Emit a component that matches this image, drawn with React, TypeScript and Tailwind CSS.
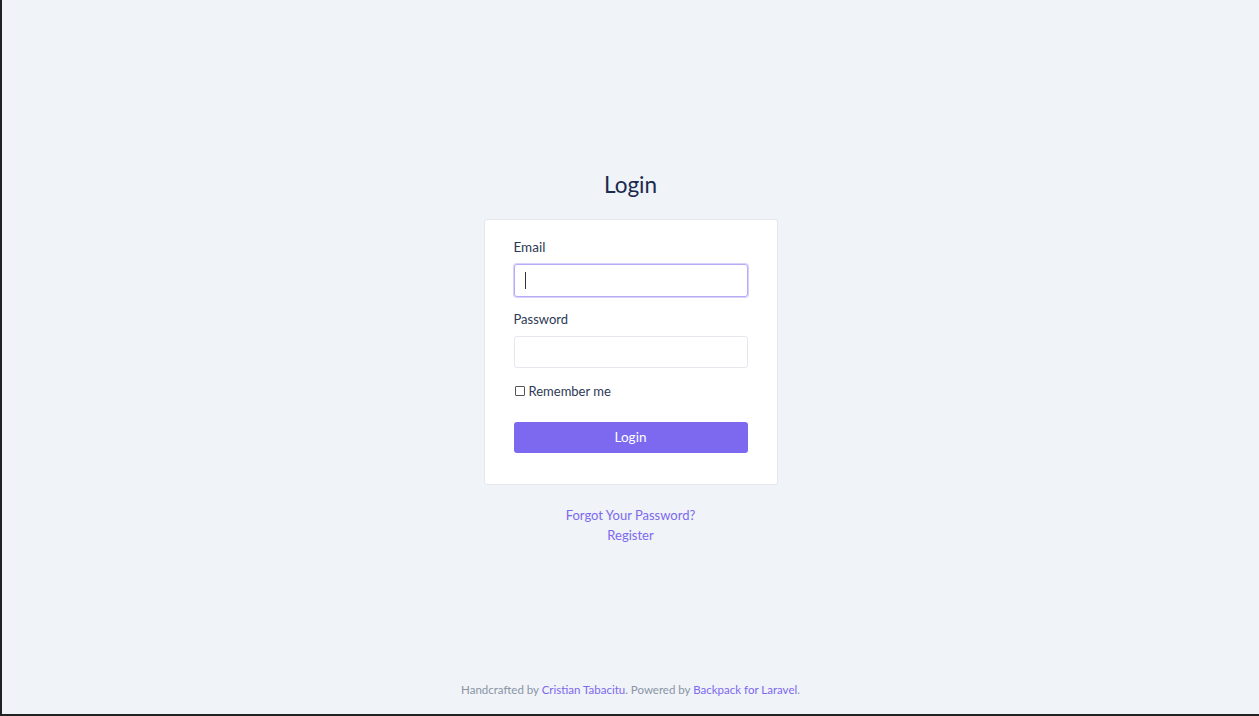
export default function App() {
  return (
    <div
      className="min-h-screen w-full bg-[#f0f3f7] border-l-2 border-b-2 border-[#222] flex flex-col text-[#1e2a4a]"
      style={{ fontFamily: "Lato, 'Noto Sans', sans-serif" }}
    >
      <main className="flex flex-col items-center pt-[170px]">
        <h1 className="text-[22.5px] leading-[30px] font-normal text-[#1b2a4e] mb-[19px]">Login</h1>

        <div className="w-[294px] bg-white border border-[#e4e7ec] rounded-[3px] px-[29px] pt-[19px] pb-[31px]">
          <label className="block text-[13.5px] leading-[17px] text-[#2d3a55] mb-[8px]">Email</label>
          <div className="h-[33px] w-full rounded-[3px] border border-[#b6abf6] shadow-[0_0_0_1px_#d8d1fb] flex items-center px-[10px] mb-[14px]">
            <span className="block w-px h-[17px] bg-[#333]" />
          </div>

          <label className="block text-[13px] leading-[17px] text-[#2d3a55] mb-[8px]">Password</label>
          <div className="h-[32px] w-full rounded-[3px] border border-[#e4e7ec] mb-[15px]" />

          <label className="flex items-center gap-[4px] text-[13px] leading-[17px] text-[#2d3a55] mb-[22px]">
            <span className="inline-block w-[10px] h-[10px] border border-[#555] rounded-[1px] -mt-[2px] ml-px" />
            Remember me
          </label>

          <button className="w-full h-[31px] rounded-[3px] bg-[#7c69ef] text-white text-[13.5px]">Login</button>
        </div>

        <div className="mt-[20px] flex flex-col items-center text-[13px] leading-[20px] text-[#7c69ef]">
          <a>Forgot Your Password?</a>
          <a>Register</a>
        </div>
      </main>

      <footer className="mt-auto pb-[16px] text-center text-[11.5px] leading-[16px] text-[#8a94a6]">
        Handcrafted by <a className="text-[#7c69ef]">Cristian Tabacitu</a>. Powered by{" "}
        <a className="text-[#7c69ef]">Backpack for Laravel</a>.
      </footer>
    </div>
  );
}
